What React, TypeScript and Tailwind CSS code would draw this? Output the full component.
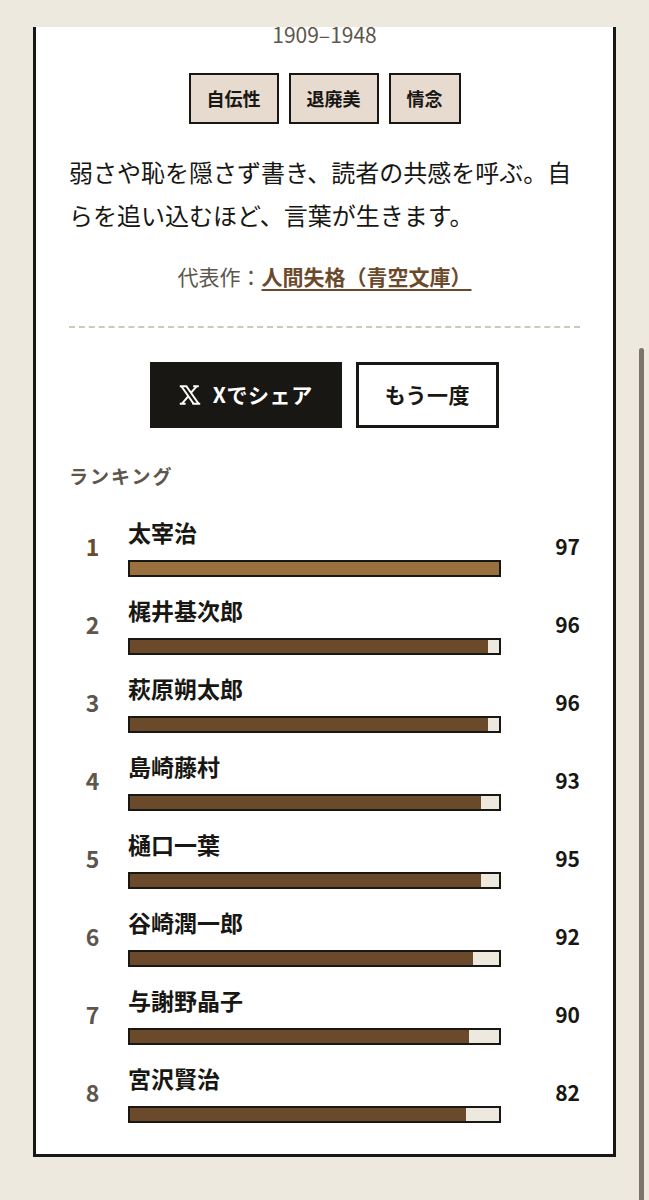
const tags = ["自伝性", "退廃美", "情念"];

const ranking = [
  { name: "太宰治", score: 97, width: 100 },
  { name: "梶井基次郎", score: 96, width: 97 },
  { name: "萩原朔太郎", score: 96, width: 97 },
  { name: "島崎藤村", score: 93, width: 95 },
  { name: "樋口一葉", score: 95, width: 95 },
  { name: "谷崎潤一郎", score: 92, width: 93 },
  { name: "与謝野晶子", score: 90, width: 92 },
  { name: "宮沢賢治", score: 82, width: 91 },
];

function XIcon() {
  return (
    <svg viewBox="0 0 22 20" className="h-5 w-[22px]" fill="none" stroke="currentColor" strokeWidth="2" aria-hidden="true">
      <path d="M.8 1.2h7.4M14.2 1.2h5.6M.8 18.8h5.8M13.4 18.8h7.8" />
      <path d="M2.4 1.2 14.6 18.8M7.4 1.2 19.6 18.8M17.8 1.2 11.9 7.8M9.4 11.2 2.8 18.8" />
    </svg>
  );
}

function Tag({ label }: { label: string }) {
  return (
    <li className="border-2 border-[#181713] bg-[#e7dbd0] px-4 py-[10px] text-lg leading-[27px] font-bold">
      {label}
    </li>
  );
}

function Ranking() {
  return (
    <section className="mt-8">
      <h2 className="text-[19px] leading-8 font-bold tracking-[2px] text-[#5c564d]">ランキング</h2>
      <ol className="mt-6 flex flex-col gap-[17px]">
        {ranking.map((item, index) => (
          <li key={item.name} className="grid grid-cols-[47px_1fr_67px] items-center gap-x-3">
            <span
              className={`pb-0.5 text-center text-[23px] leading-8 font-bold ${
                index === 0 ? "text-[#6b4a2b]" : "text-[#5c564d]"
              }`}
            >
              {index + 1}
            </span>
            <div>
              <p className="text-[23px] leading-8 font-bold">{item.name}</p>
              <div className="mt-3 h-[17px] border-2 border-[#181713] bg-[#ede9df]">
                <div
                  className={`h-full ${index === 0 ? "bg-[#99703e]" : "bg-[#6b4a2b]"}`}
                  style={{ width: `${item.width}%` }}
                />
              </div>
            </div>
            <span className="pb-0.5 text-right text-[21px] leading-8 font-bold">{item.score}</span>
          </li>
        ))}
      </ol>
    </section>
  );
}

export default function App() {
  return (
    <div
      lang="ja"
      className="min-h-screen bg-[#ede9df] px-[33px] pt-[27px] pb-[43px] font-['Noto_Sans_CJK_JP','Noto_Sans',sans-serif] text-[#181713]"
    >
      <main className="border-x-3 border-b-3 border-[#181713] bg-white px-[33px] pb-[31px]">
        {/* Author */}
        <p className="text-center text-[21px] leading-[14px] text-[#5c564d]">1909–1948</p>
        <ul className="mt-8 flex justify-center gap-[10px]">
          {tags.map((tag) => (
            <Tag key={tag} label={tag} />
          ))}
        </ul>
        <p className="mt-[26px] text-2xl leading-[43px]">
          弱さや恥を隠さず書き、読者の共感を呼ぶ。自らを追い込むほど、言葉が生きます。
        </p>
        <p className="mt-6 text-center text-[21px] leading-8 text-[#5c564d]">
          代表作：
          <a
            href="#work"
            className="font-bold text-[#6b4a2b] underline decoration-2 underline-offset-4"
          >
            人間失格（青空文庫）
          </a>
        </p>

        {/* Actions */}
        <div className="mt-[34px] flex justify-center gap-[14px] border-t-2 border-dashed border-[#cfc9b9] pt-[34px]">
          <button
            type="button"
            className="flex h-[66px] items-center gap-3 border-3 border-[#181713] bg-[#181713] px-[26px] text-[21px] font-bold tracking-wide text-white"
          >
            <XIcon />
            Xでシェア
          </button>
          <button
            type="button"
            className="h-[66px] border-3 border-[#181713] bg-white px-[26px] text-[21px] font-bold tracking-wide"
          >
            もう一度
          </button>
        </div>

        <Ranking />
      </main>

      {/* Scroll thumb */}
      <div className="absolute top-[348px] right-[5px] bottom-0 w-[5px] rounded-t-full bg-[#7b746c]" />
    </div>
  );
}
